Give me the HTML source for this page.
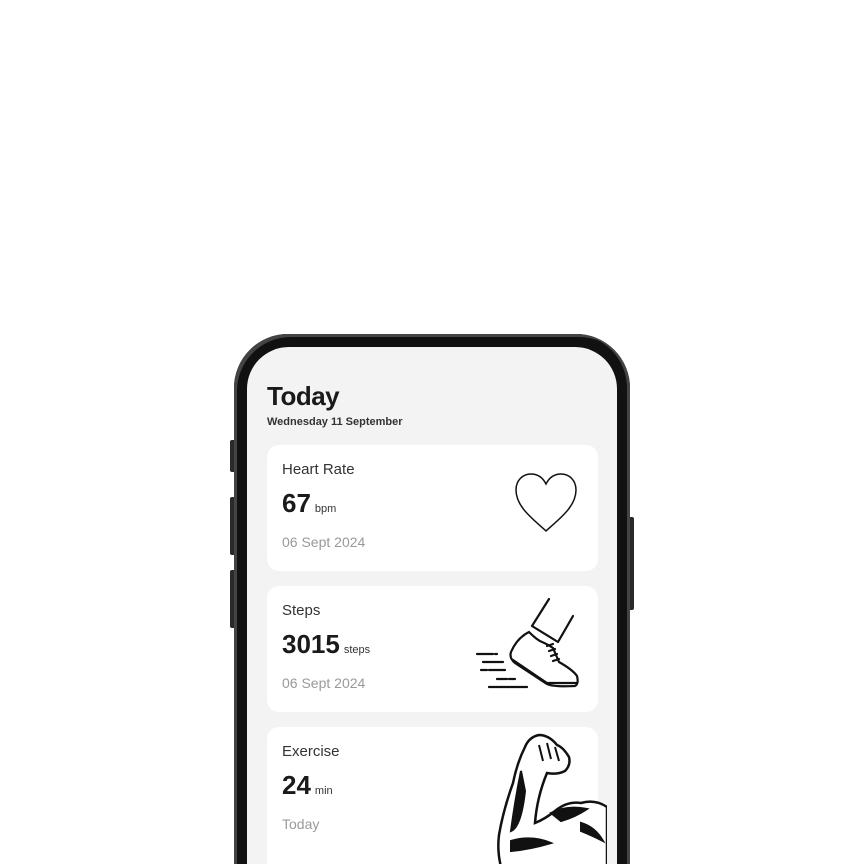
<!DOCTYPE html>
<html style="width:864px;height:864px;overflow:hidden"><head><style>
body{margin:0;width:864px;height:864px;background:#fff;position:relative;overflow:hidden;font-family:"Liberation Sans",sans-serif}
.btn{position:absolute;background:#2a2a2a;border-radius:2px}
.phone{position:absolute;left:234px;top:334px;width:396px;height:530px;background:#111;border-radius:54px 54px 0 0;box-shadow:inset 3px 3px 0 0 #444,inset -3px 0 0 0 #444;overflow:hidden}
.screen{position:absolute;left:13px;top:13px;width:370px;height:517px;background:#f3f3f3;border-radius:42px 42px 0 0;overflow:hidden}
h1{position:absolute;left:20px;top:34px;margin:0;font-size:26px;font-weight:bold;color:#1a1a1a;letter-spacing:-0.5px}
.sub{position:absolute;left:20px;top:69px;font-size:11px;font-weight:bold;color:#333}
.card{position:absolute;left:20px;width:331px;height:126px;background:#fff;border-radius:12px}
.t{position:absolute;left:15px;top:16px;font-size:15px;color:#333}
.v{position:absolute;left:15px;top:43px;font-size:26px;font-weight:bold;color:#1a1a1a}
.v span{font-size:11px;font-weight:normal;color:#333;margin-left:4px}
.d{position:absolute;left:15px;top:89px;font-size:14px;color:#999}
</style></head><body>
<div class="btn" style="left:230px;top:440px;width:6px;height:32px"></div>
<div class="btn" style="left:230px;top:497px;width:6px;height:58px"></div>
<div class="btn" style="left:230px;top:570px;width:6px;height:58px"></div>
<div class="btn" style="left:628px;top:517px;width:6px;height:93px"></div>
<div class="phone"><div class="screen">
<h1>Today</h1>
<div class="sub">Wednesday 11 September</div>
<div class="card" style="top:98px"><div class="t">Heart Rate</div><div class="v">67<span>bpm</span></div><div class="d">06 Sept 2024</div>
<svg style="position:absolute;left:246px;top:26px" width="66" height="62" viewBox="0 0 66 62"><path d="M33 60 C20 48 3 36 3 19 C3 9 10 3 18 3 C25 3 30 7 33 13 C36 7 41 3 48 3 C56 3 63 9 63 19 C63 36 46 48 33 60Z" fill="none" stroke="#111" stroke-width="1.5"/></svg></div>
<div class="card" style="top:239px"><div class="t">Steps</div><div class="v">3015<span>steps</span></div><div class="d">06 Sept 2024</div>
<svg style="position:absolute;left:200px;top:10px" width="120" height="100" viewBox="0 0 120 100" fill="none" stroke="#111" stroke-width="2.2" stroke-linecap="round"><path d="M82 3 L65 30 M106 20 L91 46 M65 30 L91 46"/><path d="M62 36 Q50 42 44 56 Q42 62 48 67 L80 88 Q86 91 108 90 Q112 88 110 80 Q106 74 92 66 L86 52 Q80 48 75 46 Q70 44 62 36Z"/><path d="M46 64 L80 87 L110 87"/><path d="M80 50 L86 48 M82 55 L88 53 M84 60 L90 58 M86 65 L92 63"/><path d="M10 58 L26 58 M28 58 L30 58 M16 66 L36 66 M14 74 L20 74 M22 74 L38 74 M30 83 L40 83 M42 83 L48 83 M22 91 L60 91"/></svg></div>
<div class="card" style="top:380px;height:137px;border-radius:12px 12px 0 0"><div class="t">Exercise</div><div class="v">24<span>min</span></div><div class="d">Today</div>
<svg style="position:absolute;left:224px;top:4px" width="116" height="133" viewBox="0 0 116 133"><path d="M48 4 Q38 6 34 16 Q26 32 22 52 Q12 80 8 104 Q6 120 10 136 L116 136 L116 76 Q104 68 90 72 Q76 70 64 80 Q54 88 44 92 Q46 66 56 42 Q66 44 74 40 Q80 34 78 26 Q72 16 66 14 Q58 4 48 4Z" fill="#fff" stroke="#111" stroke-width="2.5"/><path d="M30 40 Q24 70 20 100 Q30 96 34 60Z M60 82 Q76 74 96 78 Q84 86 70 90Z M20 110 Q40 104 60 112 Q40 118 20 120Z M90 92 Q104 96 112 110 Q100 104 90 100Z M48 14 L52 30 M56 12 L60 28 M64 16 L68 30" fill="#111" stroke="#111" stroke-width="2"/></svg></div>
</div></div>
</body></html>
